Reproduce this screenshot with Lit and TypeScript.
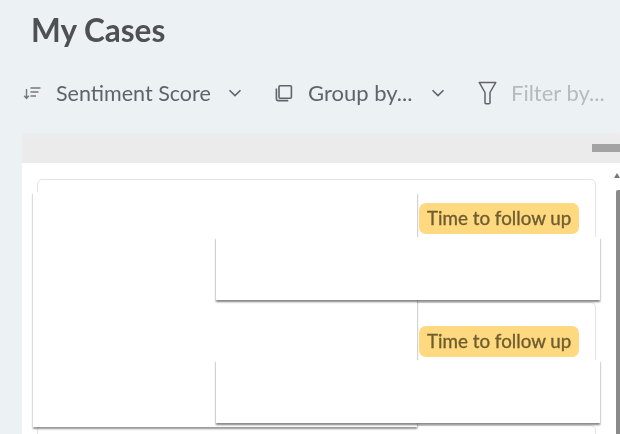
import {LitElement, html, css} from 'lit';
import {customElement} from 'lit/decorators.js';

const chevron = html`<svg class="chevron" width="14" height="8" viewBox="0 0 14 8">
  <path d="M1.5 1.2 7 6.6l5.5-5.4" fill="none" stroke="currentColor" stroke-width="1.6"/>
</svg>`;

@customElement('app-root')
export class AppRoot extends LitElement {
  override render() {
    return html`
      <h1 class="title">My Cases</h1>
      <div class="toolbar">
        <svg class="sort-icon" width="18" height="14" viewBox="0 0 18 14">
          <path d="M3.5 3v9M1.2 9.8 3.5 12.4l2.3-2.6M7.5 2h10M7.5 6h8M7.5 10h5.5" fill="none" stroke="currentColor" stroke-width="1.4"/>
        </svg>
        <span class="label sort-label">Sentiment Score</span>
        ${chevron}
        <svg class="copy-icon" width="18" height="18" viewBox="0 0 18 18">
          <rect x="4" y="1.8" width="12.4" height="12.4" rx="1" fill="none" stroke="currentColor" stroke-width="1.6"/>
          <path d="M1.4 4.5v10.6c0 .9.6 1.5 1.5 1.5h10.4" fill="none" stroke="currentColor" stroke-width="1.6"/>
        </svg>
        <span class="label group-label">Group by...</span>
        ${chevron}
        <svg class="filter-icon" width="19" height="24" viewBox="0 0 19 24">
          <path d="M1.2 1.4h16.6L12 11.5v10.2c0 .7-.6 1-1.1 1H8.1c-.6 0-1.1-.4-1.1-1V11.5Z" fill="none" stroke="currentColor" stroke-width="1.5" stroke-linejoin="round"/>
        </svg>
        <span class="label muted">Filter by...</span>
      </div>
      <section class="panel">
        <div class="panel-head"><span class="dash"></span></div>
        <div class="panel-body">
          <div class="cases">
            <article class="card"><span class="badge">Time to follow up</span></article>
            <article class="card"><span class="badge">Time to follow up</span></article>
            <article class="card"></article>
          </div>
          <div class="scroll-arrow"></div>
          <div class="scrollbar"></div>
          <div class="cover cover-left"></div>
          <div class="cover cover-right first"></div>
          <div class="cover cover-right second"></div>
        </div>
      </section>
    `;
  }

  static override styles = css`
    :host {
      display: block;
      width: 620px;
      height: 434px;
      overflow: hidden;
      background: #ecf1f4;
      font-family: 'Lato', sans-serif;
      color: #5f6468;
    }

    .title {
      margin: 0;
      padding: 11px 0 0 31px;
      height: 59px;
      box-sizing: border-box;
      font-size: 31.5px;
      line-height: 38px;
      font-weight: 700;
      color: #4d5154;
      filter: blur(0.6px);
    }

    .toolbar {
      display: flex;
      align-items: center;
      height: 48px;
      padding-left: 23px;
      filter: blur(0.6px);
      margin-top: 10px;
      margin-bottom: 16px;
      white-space: nowrap;
    }

    .label {
      font-size: 21.5px;
      line-height: 28px;
    }

    .sort-label {
      width: 154px;
      margin-left: 15px;
    }

    .group-label {
      width: 105px;
      margin-left: 15px;
      font-size: 22px;
    }

    .muted {
      color: #b6bbbe;
      margin-left: 14px;
      font-size: 22px;
    }

    .chevron {
      margin-left: 18px;
      flex: none;
    }

    .copy-icon {
      margin-left: 33px;
      flex: none;
    }

    .filter-icon {
      margin-left: 33px;
      flex: none;
    }

    .sort-icon {
      flex: none;
      color: #75797c;
    }

    .panel {
      margin-left: 22px;
    }

    .panel-head {
      display: flex;
      justify-content: flex-end;
      align-items: center;
      height: 30px;
      background: linear-gradient(#ecedee, #ebebeb 6px);
    }

    .dash {
      width: 28px;
      height: 8px;
      background: #a3a3a3;
      filter: blur(0.4px);
    }

    .panel-body {
      position: relative;
      height: 271px;
      overflow: hidden;
      background: #fff;
      padding: 16px 24px 0 15px;
      box-sizing: border-box;
    }

    .cases {
      display: flex;
      flex-direction: column;
      gap: 3px;
    }

    .card {
      display: flex;
      justify-content: flex-end;
      align-items: flex-start;
      height: 120px;
      flex: none;
      box-sizing: border-box;
      padding: 23px 16px 0 0;
      border: 1px solid #e4e4e4;
      border-radius: 5px;
    }

    .badge {
      width: 160px;
      height: 31px;
      box-sizing: border-box;
      padding-left: 8px;
      border-radius: 7px;
      background: #fed97f;
      color: #6d5d30;
      font-size: 18.8px;
      line-height: 30px;
      white-space: nowrap;
      -webkit-text-stroke: 0.35px #6d5d30;
      filter: blur(0.6px);
    }

    .scroll-arrow {
      position: absolute;
      top: 10px;
      right: 0;
      width: 0;
      height: 0;
      border-left: 3px solid transparent;
      border-right: 3px solid transparent;
      border-bottom: 5px solid #777;
    }

    .scrollbar {
      position: absolute;
      top: 27px;
      right: 0;
      bottom: 0;
      width: 4px;
      background: #8a8a8a;
      border-radius: 2px 0 0 0;
    }

    .cover {
      position: absolute;
      background: #fff;
    }

    .cover-left {
      left: 11px;
      top: 29px;
      width: 384px;
      height: 235px;
      box-shadow: 0 2px 2px rgba(0, 0, 0, 0.3), 1px 2px 1px rgba(0, 0, 0, 0.09), -1px 2px 1px rgba(0, 0, 0, 0.05);
    }

    .cover-right {
      left: 194px;
      width: 384px;
      height: 63px;
      box-shadow: 0 2px 2px rgba(0, 0, 0, 0.42), 1px 2px 1px rgba(0, 0, 0, 0.04), -1px 2px 1px rgba(0, 0, 0, 0.05);
    }

    .first {
      top: 74px;
    }

    .second {
      top: 197px;
    }
  `;
}

declare global {
  interface HTMLElementTagNameMap {
    'app-root': AppRoot;
  }
}
